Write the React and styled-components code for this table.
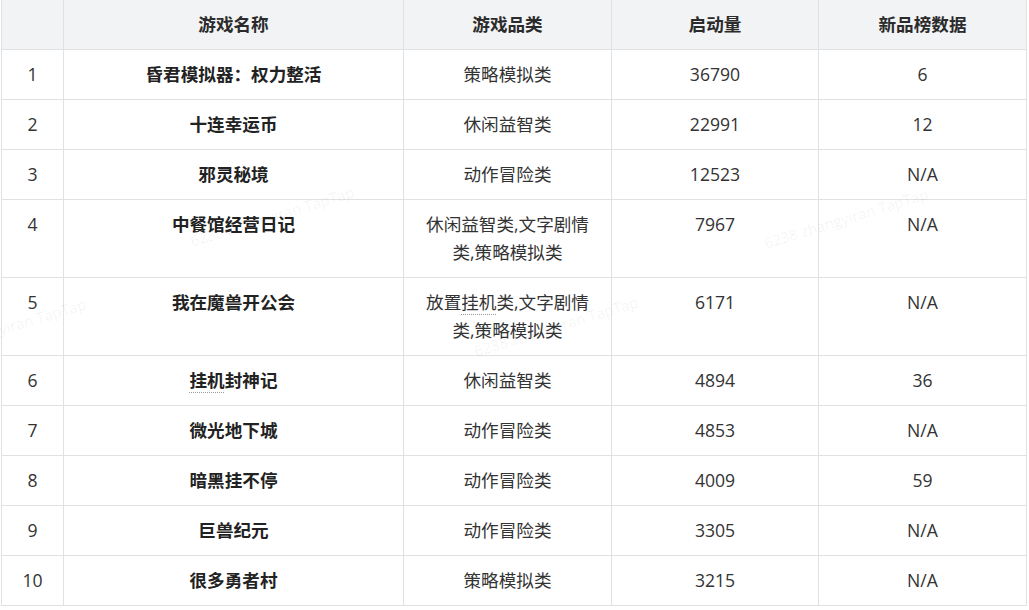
import styled, { createGlobalStyle } from "styled-components";

const GlobalStyle = createGlobalStyle`
    html, body {
        margin: 0;
        padding: 0;
        background: #ffffff;
    }
    body {
        font-family: "Open Sans", "Noto Sans CJK SC", sans-serif;
        color: #333333;
        overflow: hidden;
    }
`;

const Wrapper = styled.div`
    position: relative;
    padding-left: 1px;
    margin-top: -1px;
    overflow: hidden;
`;

const Table = styled.table`
    border-collapse: collapse;
    table-layout: fixed;
    width: 1026px;
    font-size: 17.6px;
    line-height: 28px;
`;

const HeadCell = styled.th`
    background-color: #f2f3f5;
    border: 1px solid #dfe2e5;
    padding: 10px 16px 11px 16px;
    font-weight: 700;
    color: #2b2b2b;
    text-align: center;
`;

const Cell = styled.td`
    border: 1px solid #dfe2e5;
    padding: 10px 16px 11px 16px;
    text-align: center;
    vertical-align: top;
    color: #333333;
    font-weight: ${(props) => (props.$bold ? 700 : 400)};
    ${(props) => props.$bold && "color: #222222;"}
`;

const Term = styled.span`
    text-decoration: underline dotted #9a9a9a;
    text-underline-offset: 5px;
    text-decoration-thickness: 1px;
`;

const Watermark = styled.div`
    position: absolute;
    pointer-events: none;
    white-space: nowrap;
    font-family: "Open Sans", sans-serif;
    font-size: 15px;
    color: rgba(0, 0, 0, 0.06);
    transform: translate(-50%, -50%) rotate(-17deg);
`;

const rows = [
    [1, "昏君模拟器：权力整活", "策略模拟类", "36790", "6"],
    [2, "十连幸运币", "休闲益智类", "22991", "12"],
    [3, "邪灵秘境", "动作冒险类", "12523", "N/A"],
    [4, "中餐馆经营日记", "休闲益智类,文字剧情类,策略模拟类", "7967", "N/A"],
    [5, "我在魔兽开公会", <>放置<Term>挂机</Term>类,文字剧情类,策略模拟类</>, "6171", "N/A"],
    [6, <><Term>挂机</Term>封神记</>, "休闲益智类", "4894", "36"],
    [7, "微光地下城", "动作冒险类", "4853", "N/A"],
    [8, "暗黑挂不停", "动作冒险类", "4009", "59"],
    [9, "巨兽纪元", "动作冒险类", "3305", "N/A"],
    [10, "很多勇者村", "策略模拟类", "3215", "N/A"],
];

const marks = [
    [272, 216],
    [846, 218],
    [4, 328],
    [556, 326],
];

function App() {
    return (
        <>
            <GlobalStyle />
            <Wrapper>
                <Table>
                    <colgroup>
                        <col style={{ width: 62 }} />
                        <col style={{ width: 340 }} />
                        <col style={{ width: 208 }} />
                        <col style={{ width: 207 }} />
                        <col style={{ width: 208 }} />
                    </colgroup>
                    <thead>
                        <tr>
                            <HeadCell></HeadCell>
                            <HeadCell>游戏名称</HeadCell>
                            <HeadCell>游戏品类</HeadCell>
                            <HeadCell>启动量</HeadCell>
                            <HeadCell>新品榜数据</HeadCell>
                        </tr>
                    </thead>
                    <tbody>
                        {rows.map(([idx, name, cat, starts, rank]) => (
                            <tr key={idx}>
                                <Cell>{idx}</Cell>
                                <Cell $bold>{name}</Cell>
                                <Cell>{cat}</Cell>
                                <Cell>{starts}</Cell>
                                <Cell>{rank}</Cell>
                            </tr>
                        ))}
                    </tbody>
                </Table>
                {marks.map(([x, y]) => (
                    <Watermark key={x} style={{ left: x, top: y + 1 }}>
                        6238 zhangyiran TapTap
                    </Watermark>
                ))}
            </Wrapper>
        </>
    );
}

export default App;
